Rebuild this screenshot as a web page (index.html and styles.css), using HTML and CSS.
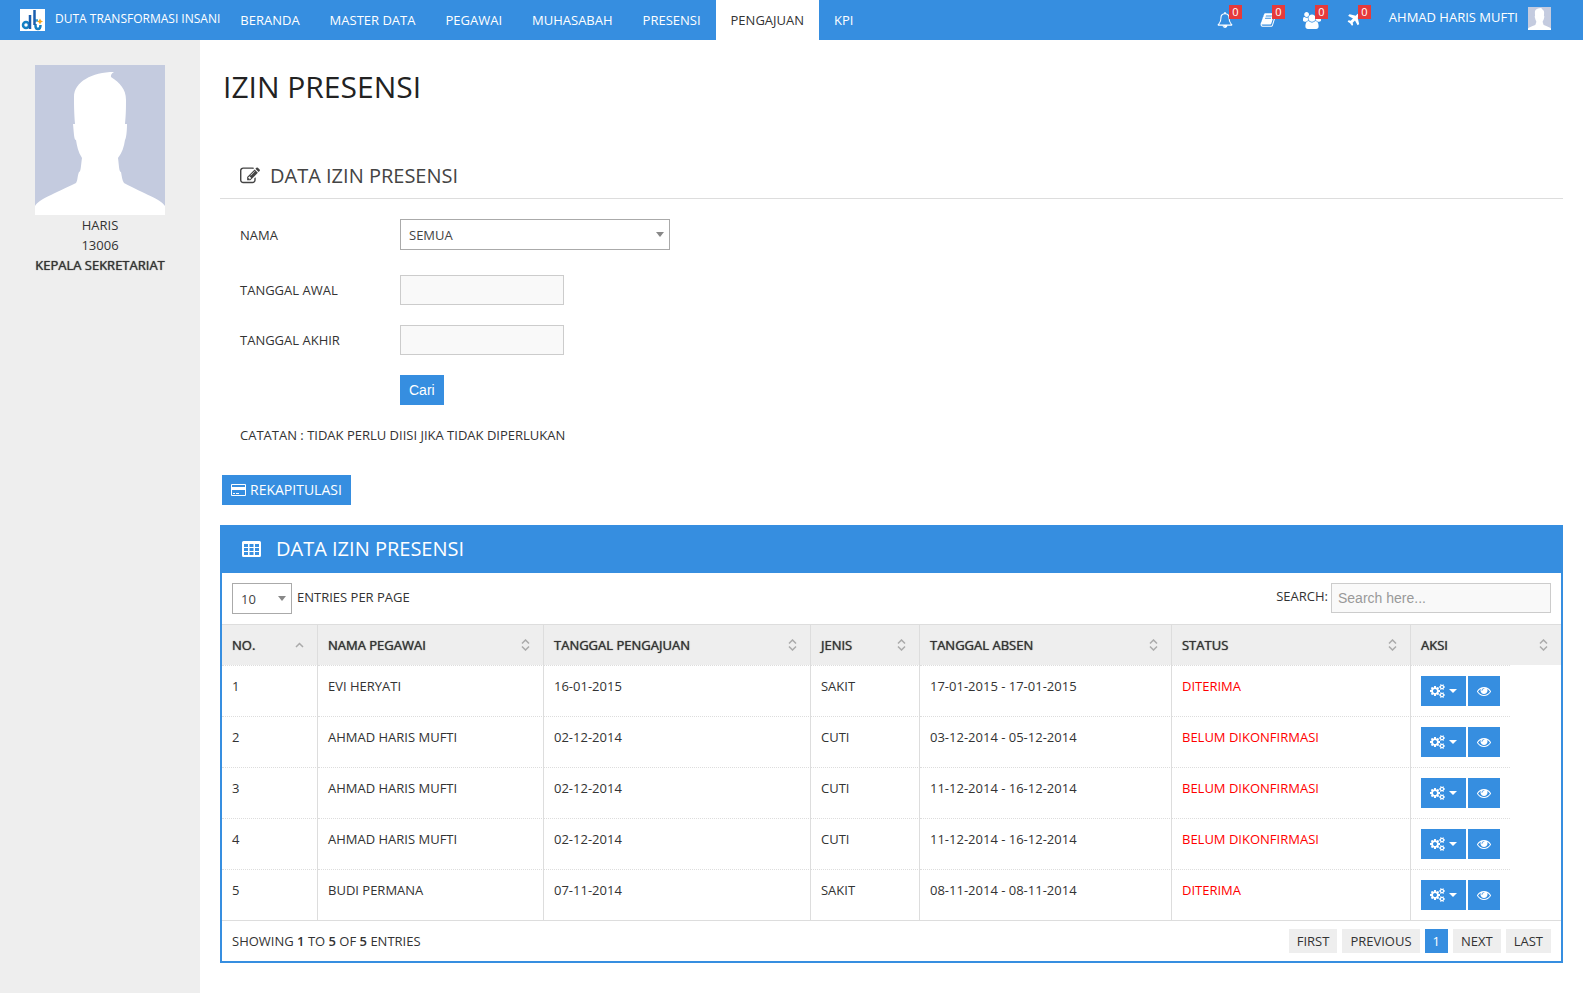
FILE: index.html
```html
<!DOCTYPE html>
<html lang="id">
<head>
<meta charset="utf-8">
<title>Izin Presensi</title>
<link rel="stylesheet" href="styles.css">
</head>
<body>
<svg class="sprite" aria-hidden="true">
  <symbol id="i-edit" viewBox="0 0 1792 1792"><path d="M888 1184l116-116-152-152-116 116v56h96v96h56zm440-720q-16-16-33 1l-350 350q-17 17-1 33t33-1l350-350q17-17 1-33zm80 594v190q0 119-84.5 203.5t-203.5 84.5h-832q-119 0-203.5-84.5t-84.5-203.5v-832q0-119 84.5-203.5t203.5-84.5h832q63 0 117 25 15 7 18 23 3 17-9 29l-49 49q-14 14-32 8-23-6-45-6h-832q-66 0-113 47t-47 113v832q0 66 47 113t113 47h832q66 0 113-47t47-113v-126q0-13 9-22l64-64q15-15 35-7t20 29zm-96-738l288 288-672 672h-288v-288zm444 132l-92 92-288-288 92-92q28-28 68-28t68 28l152 152q28 28 28 68t-28 68z"/></symbol>
  <symbol id="i-eye" viewBox="0 0 1792 1792"><path d="M1664 960q-152-236-381-353 61 104 61 225 0 185-131.5 316.5t-316.5 131.5-316.5-131.5-131.5-316.5q0-121 61-225-229 117-381 353 133 205 333.5 326.5t434.5 121.5 434.5-121.5 333.5-326.5zm-720-384q0-20-14-34t-34-14q-125 0-214.5 89.5t-89.5 214.5q0 20 14 34t34 14 34-14 14-34q0-86 61-147t147-61q20 0 34-14t14-34zm848 384q0 34-20 69-140 230-376.5 368.5t-499.5 138.5-499.5-139-376.5-368q-20-35-20-69t20-69q140-229 376.5-368t499.5-139 499.5 139 376.5 368q20 35 20 69z"/></symbol>
  <symbol id="i-cogs" viewBox="0 0 1920 1792"><path d="M896 896q0-106-75-181t-181-75-181 75-75 181 75 181 181 75 181-75 75-181zm768 512q0-52-38-90t-90-38-90 38-38 90q0 53 37.500 90.500t90.500 37.500 90.500-37.500 37.500-90.500zm0-1024q0-52-38-90t-90-38-90 38-38 90q0 53 37.500 90.500t90.500 37.500 90.500-37.500 37.500-90.500zm-384 421v185q0 10-7 19.500t-16 10.500l-155 24q-11 35-32 76 34 48 90 115 7 11 7 20 0 12-7 19-23 30-82.500 89.500t-78.500 59.500q-11 0-21-7l-115-90q-37 19-77 31-11 108-23 155-7 24-30 24h-186q-11 0-20-7.500t-10-17.500l-23-153q-34-10-75-31l-118 89q-7 7-20 7-11 0-21-8-144-133-144-160 0-9 7-19 10-14 41-53t47-61q-23-44-35-82l-152-24q-10-1-17-9.500t-7-19.500v-185q0-10 7-19.500t16-10.500l155-24q11-35 32-76-34-48-90-115-7-11-7-20 0-12 7-20 22-30 82-89t79-59q11 0 21 7l115 90q34-18 77-32 11-108 23-154 7-24 30-24h186q11 0 20 7.500t10 17.500l23 153q34 10 75 31l118-89q8-7 20-7 11 0 21 8 144 133 144 160 0 8-7 19-12 16-42 54t-45 60q23 48 34 82l152 23q10 2 17 10.500t7 19.500zm640 533v140q0 16-149 31-12 27-30 52 51 113 51 138 0 4-4 7-122 71-124 71-8 0-46-47t-52-68q-20 2-30 2t-30-2q-14 21-52 68t-46 47q-2 0-124-71-4-3-4-7 0-25 51-138-18-25-30-52-149-15-149-31v-140q0-16 149-31 13-29 30-52-51-113-51-138 0-4 4-7 4-2 35-20t59-34 30-16q8 0 46 46.500t52 67.500q20-2 30-2t30 2q51-71 92-112l6-2q4 0 124 70 4 3 4 7 0 25-51 138 17 23 30 52 149 15 149 31zm0-1024v140q0 16-149 31-12 27-30 52 51 113 51 138 0 4-4 7-122 71-124 71-8 0-46-47t-52-68q-20 2-30 2t-30-2q-14 21-52 68t-46 47q-2 0-124-71-4-3-4-7 0-25 51-138-18-25-30-52-149-15-149-31v-140q0-16 149-31 13-29 30-52-51-113-51-138 0-4 4-7 4-2 35-20t59-34 30-16q8 0 46 46.500t52 67.500q20-2 30-2t30 2q51-71 92-112l6-2q4 0 124 70 4 3 4 7 0 25-51 138 17 23 30 52 149 15 149 31z"/></symbol>
  <symbol id="i-users" viewBox="-64 0 1920 1792"><path d="M529 896q-162 5-265 128h-134q-82 0-138-40.500t-56-118.500q0-353 124-353 6 0 43.500 21t97.500 42.500 119 21.500q67 0 133-23-5 37-5 66 0 139 81 256zm1071 637q0 120-73 189.500t-194 69.500h-874q-121 0-194-69.500t-73-189.500q0-53 3.500-103.500t14-109 26.500-108.500 43-97.500 62-81 85.500-53.500 111.500-20q10 0 43 21.500t73 48 107 48 135 21.500 135-21.500 107-48 73-48 43-21.500q61 0 111.500 20t85.500 53.500 62 81 43 97.500 26.500 108.500 14 109 3.500 103.500zm-1024-1277q0 106-75 181t-181 75-181-75-75-181 75-181 181-75 181 75 75 181zm704 384q0 159-112.500 271.500t-271.500 112.500-271.500-112.500-112.500-271.500 112.500-271.500 271.500-112.500 271.500 112.500 112.500 271.500zm576 225q0 78-56 118.500t-138 40.500h-134q-103-123-265-128 81-117 81-256 0-29-5-66 66 23 133 23 59 0 119-21.500t97.500-42.500 43.500-21q124 0 124 353zm-128-609q0 106-75 181t-181 75-181-75-75-181 75-181 181-75 181 75 75 181z"/></symbol>
  <symbol id="i-plane" viewBox="0 0 1792 1792"><path d="M1568 160q44 52 12 148t-108 172l-161 161 160 696q5 19-12 33l-128 96q-7 6-19 6-4 0-7-1-15-3-21-16l-279-508-259 259 53 194q5 17-8 31l-96 96q-9 9-23 9h-2q-15-2-24-13l-189-252-252-189q-11-7-13-23-1-13 9-25l96-97q9-9 23-9 6 0 8 1l194 53 259-259-508-279q-14-8-17-24-2-16 9-27l128-128q14-13 30-8l665 159 160-160q76-76 172-108t148 12z"/></symbol>
  <symbol id="i-book" viewBox="0 0 1792 1792"><path d="M1703 478q40 57 18 129l-275 906q-19 64-76.500 107.500t-122.500 43.500h-923q-77 0-148.500-53.500t-99.500-131.500q-24-67-2-127 0-4 3-27t4-37q1-8-3-21.500t-3-19.500q2-11 8-21t16.500-23.500 16.500-23.500q23-38 45-91.500t30-91.500q3-10 .5-30t-.5-28q3-11 17-28t17-23q21-36 42-92t25-90q1-9-2.500-32t.5-28q4-13 22-30.500t22-22.500q19-26 42.500-84.500t27.500-96.500q1-8-3-25.500t-2-26.500q2-8 9-18t18-23 17-21q8-12 16.500-30.500t15-35 16-36 19.500-32 26.500-23.500 36-11.500 47.500 5.500l-1 3q38-9 51-9h761q74 0 114 56t18 130l-274 906q-36 119-71.500 153.500t-128.500 34.500h-869q-27 0-38 15-11 16-1 43 24 70 144 70h923q29 0 56-15.500t35-41.500l300-987q7-22 5-57 38 15 59 43zm-1064 2q-4 13 2 22.500t20 9.500h608q13 0 25.500-9.500t16.500-22.500l21-64q4-13-2-22.500t-20-9.500h-608q-13 0-25.500 9.500t-16.500 22.500zm-83 256q-4 13 2 22.500t20 9.500h608q13 0 25.500-9.500t16.500-22.500l21-64q4-13-2-22.500t-20-9.500h-608q-13 0-25.500 9.500t-16.500 22.500z"/></symbol>
  <symbol id="i-bell" viewBox="0 0 1792 1792"><path d="M912 1696q0-16-16-16-59 0-101.500-42.500t-42.500-101.500q0-16-16-16t-16 16q0 73 51.500 124.500t124.500 51.500q16 0 16-16zm-666-288h1300q-266-300-266-832 0-51-24-105t-69-103-121.500-80.500-169.500-31.500-169.500 31.500-121.500 80.500-69 103-24 105q0 532-266 832zm1482 0q0 52-38 90t-90 38h-448q0 106-75 181t-181 75-181-75-75-181h-448q-52 0-90-38t-38-90q50-42 91-88t85-119.500 74.500-158.500 50-206 19.500-260q0-152 117-282.500t307-158.500q-8-19-8-39 0-40 28-68t68-28 68 28 28 68q0 20-8 39 190 28 307 158.500t117 282.500q0 139 19.500 260t50 206 74.500 158.500 85 119.500 91 88z"/></symbol>
  <symbol id="i-table" viewBox="0 0 19 16"><path fill-rule="evenodd" d="M1.500 0h16A1.500 1.500 0 0 1 19 1.500v13a1.500 1.500 0 0 1-1.500 1.500h-16A1.500 1.500 0 0 1 0 14.500v-13A1.500 1.500 0 0 1 1.500 0zM2 3v3h4V3zM7.500 3v3h4V3zM13 3v3h4V3zM2 7v3h4V7zM7.500 7v3h4V7zM13 7v3h4V7zM2 11v3h4v-3zM7.500 11v3h4v-3zM13 11v3h4v-3z"/></symbol>
  <symbol id="i-card" viewBox="0 0 15 12"><path fill-rule="evenodd" d="M1 0h13a1 1 0 0 1 1 1v10a1 1 0 0 1-1 1H1a1 1 0 0 1-1-1V1a1 1 0 0 1 1-1zM1 1v2h13V1zM1 6v5h13V6zM2 9h2v1H2zM5 9h3v1H5z"/></symbol>
  <symbol id="i-sort" viewBox="0 0 9 12"><path class="line" d="M1 4.500L4.500 1 8 4.500M1 7.500L4.500 11 8 7.500"/></symbol>
  <symbol id="i-asc" viewBox="0 0 9 12"><path class="line" d="M1 8L4.500 4.500 8 8"/></symbol>
  <symbol id="i-person" viewBox="0 0 130 150" preserveAspectRatio="none"><path fill="#c4cbdf" d="M0 0h130v150H0z"/><path fill="#fff" d="M0 150v-9c4-7 19-12 41-23 2-3 1-6 3-11 2 0 2-8 3-14-4-6-5-12-6-18-2 0-2-6-3-16h2c-1-13-1-20-1-27C39 17 57 7 79 7c-3 2-3 3-3 5 9 6 15 12 15 23 0 8 0 14-1 24h2c0 8-1 15-2 16-1 7-3 13-7 18 1 7 1 14 3 14 1 5 1 8 3 11 20 11 37 16 41 23v9z"/></symbol>
</svg>

<header class="topbar">
  <a class="brand" href="#">
    <svg class="logo" viewBox="0 0 25 22" aria-hidden="true"><path fill="#fff" d="M0 0h25v22H0z"/><g fill="none" stroke-width="2.500"><circle cx="6" cy="16" r="3" stroke="#1480c4"/><path stroke="#35a0d0" d="M15 11.500h3"/><path stroke="#1480c4" d="M15.500 15v2q0 3 2.500 3 2.500 0 2.500-4"/><path stroke="#1b5fae" d="M10 20V6M14.500 16V1"/></g><path fill="#f6a51c" d="M20 9.500l1 2 2 1-2 1-1 2-1-2-2-1 2-1z"/></svg>
    <span>DUTA TRANSFORMASI INSANI</span>
  </a>
  <nav class="menu">
    <a href="#">BERANDA</a><a href="#">MASTER DATA</a><a href="#">PEGAWAI</a><a href="#">MUHASABAH</a><a href="#">PRESENSI</a><a class="active" href="#">PENGAJUAN</a><a href="#">KPI</a>
  </nav>
  <div class="tools">
    <a class="notice" href="#" aria-label="Notifikasi"><svg class="i16"><use href="#i-bell"/></svg><span class="badge">0</span></a>
    <a class="notice" href="#" aria-label="Buku"><svg class="i16"><use href="#i-book"/></svg><span class="badge">0</span></a>
    <a class="notice" href="#" aria-label="Pegawai"><svg class="i18"><use href="#i-users"/></svg><span class="badge">0</span></a>
    <a class="notice" href="#" aria-label="Perjalanan"><svg class="i16"><use href="#i-plane"/></svg><span class="badge">0</span></a>
    <a class="account" href="#"><span>AHMAD HARIS MUFTI</span><svg class="avatar"><use href="#i-person"/></svg></a>
  </div>
</header>

<div class="page">
  <aside class="sidebar">
    <svg class="photo"><use href="#i-person"/></svg>
    <div>HARIS</div>
    <div>13006</div>
    <strong>KEPALA SEKRETARIAT</strong>
  </aside>

  <main class="content">
    <h1>IZIN PRESENSI</h1>

    <section>
      <h2 class="section-title"><svg class="i20"><use href="#i-edit"/></svg>DATA IZIN PRESENSI</h2>
      <form class="filter">
        <label class="wide-label" for="nama">NAMA</label>
        <span class="select wide"><select id="nama"><option>SEMUA</option></select></span>
        <label for="awal">TANGGAL AWAL</label>
        <input class="field date" id="awal" type="text">
        <label for="akhir">TANGGAL AKHIR</label>
        <input class="field date" id="akhir" type="text">
        <button class="btn search-btn" type="button">Cari</button>
        <p class="note">CATATAN : TIDAK PERLU DIISI JIKA TIDAK DIPERLUKAN</p>
      </form>
    </section>

    <button class="btn recap" type="button"><svg class="card"><use href="#i-card"/></svg>REKAPITULASI</button>

    <section class="panel">
      <h2 class="panel-title"><svg class="grid-icon"><use href="#i-table"/></svg>DATA IZIN PRESENSI</h2>
      <div class="controls">
        <div class="entries"><span class="select"><select id="len"><option>10</option></select></span><label for="len">ENTRIES PER PAGE</label></div>
        <div class="search"><label for="q">SEARCH:</label><input class="field" id="q" type="text" placeholder="Search here..."></div>
      </div>
      <table>
        <colgroup><col class="c-no"><col class="c-name"><col><col class="c-type"><col class="c-absen"><col class="c-status"><col class="c-act"><col class="c-rest"></colgroup>
        <thead>
          <tr>
            <th><div class="th">NO.<svg class="sort"><use href="#i-asc"/></svg></div></th>
            <th><div class="th">NAMA PEGAWAI<svg class="sort"><use href="#i-sort"/></svg></div></th>
            <th><div class="th">TANGGAL PENGAJUAN<svg class="sort"><use href="#i-sort"/></svg></div></th>
            <th><div class="th">JENIS<svg class="sort"><use href="#i-sort"/></svg></div></th>
            <th><div class="th">TANGGAL ABSEN<svg class="sort"><use href="#i-sort"/></svg></div></th>
            <th><div class="th">STATUS<svg class="sort"><use href="#i-sort"/></svg></div></th>
            <th class="last" colspan="2"><div class="th">AKSI<svg class="sort"><use href="#i-sort"/></svg></div></th>
          </tr>
        </thead>
        <tbody>
          <tr><td>1</td><td>EVI HERYATI</td><td>16-01-2015</td><td>SAKIT</td><td>17-01-2015 - 17-01-2015</td><td class="status">DITERIMA</td><td class="act"><div class="actions"><button class="btn gear" type="button" aria-label="Opsi"><svg class="cogs"><use href="#i-cogs"/></svg><i class="caret"></i></button><button class="btn" type="button" aria-label="Lihat"><svg class="i14"><use href="#i-eye"/></svg></button></div></td></tr>
          <tr><td>2</td><td>AHMAD HARIS MUFTI</td><td>02-12-2014</td><td>CUTI</td><td>03-12-2014 - 05-12-2014</td><td class="status">BELUM DIKONFIRMASI</td><td class="act"><div class="actions"><button class="btn gear" type="button" aria-label="Opsi"><svg class="cogs"><use href="#i-cogs"/></svg><i class="caret"></i></button><button class="btn" type="button" aria-label="Lihat"><svg class="i14"><use href="#i-eye"/></svg></button></div></td></tr>
          <tr><td>3</td><td>AHMAD HARIS MUFTI</td><td>02-12-2014</td><td>CUTI</td><td>11-12-2014 - 16-12-2014</td><td class="status">BELUM DIKONFIRMASI</td><td class="act"><div class="actions"><button class="btn gear" type="button" aria-label="Opsi"><svg class="cogs"><use href="#i-cogs"/></svg><i class="caret"></i></button><button class="btn" type="button" aria-label="Lihat"><svg class="i14"><use href="#i-eye"/></svg></button></div></td></tr>
          <tr><td>4</td><td>AHMAD HARIS MUFTI</td><td>02-12-2014</td><td>CUTI</td><td>11-12-2014 - 16-12-2014</td><td class="status">BELUM DIKONFIRMASI</td><td class="act"><div class="actions"><button class="btn gear" type="button" aria-label="Opsi"><svg class="cogs"><use href="#i-cogs"/></svg><i class="caret"></i></button><button class="btn" type="button" aria-label="Lihat"><svg class="i14"><use href="#i-eye"/></svg></button></div></td></tr>
          <tr><td>5</td><td>BUDI PERMANA</td><td>07-11-2014</td><td>SAKIT</td><td>08-11-2014 - 08-11-2014</td><td class="status">DITERIMA</td><td class="act"><div class="actions"><button class="btn gear" type="button" aria-label="Opsi"><svg class="cogs"><use href="#i-cogs"/></svg><i class="caret"></i></button><button class="btn" type="button" aria-label="Lihat"><svg class="i14"><use href="#i-eye"/></svg></button></div></td></tr>
        </tbody>
      </table>
      <div class="foot">
        <div>SHOWING <b>1</b> TO <b>5</b> OF <b>5</b> ENTRIES</div>
        <nav class="pager"><a href="#">FIRST</a><a href="#">PREVIOUS</a><a class="current" href="#">1</a><a href="#">NEXT</a><a href="#">LAST</a></nav>
      </div>
    </section>
  </main>
</div>
</body>
</html>
```
FILE: styles.css
```css
* { box-sizing: border-box; }
body {
  margin: 0;
  min-height: 100vh;
  display: flex;
  flex-direction: column;
  font: 13px/20px "Open Sans", sans-serif;
  color: #333;
  background: #fff;
}
a { color: inherit; text-decoration: none; }
svg { display: block; flex: none; fill: currentColor; }
.sprite { position: absolute; width: 0; height: 0; }
.line { fill: none; stroke: currentColor; stroke-width: 1.5; }
b { font-weight: 600; }
strong, th { font-weight: 400; text-shadow: 0 0 1px #333; }

.topbar {
  display: flex;
  height: 40px;
  color: #fff;
  background: #368ee0;
}
.brand { display: flex; gap: 10px; padding: 9px 5px 0 20px; font-size: 12px; white-space: nowrap; }
.brand span { line-height: 19px; }
.logo { width: 25px; height: 22px; }
.menu { display: flex; flex: 1; }
.menu a { padding: 0 15px; line-height: 40px; white-space: nowrap; }
.menu .active { color: #333; background: #fff; }
.tools { display: flex; padding-right: 32px; }
.notice { position: relative; width: 43px; padding: 12px 0 0 12px; }
.badge {
  position: absolute;
  top: 5px;
  right: 6px;
  width: 13px;
  font-size: 11px;
  line-height: 14px;
  text-align: center;
  background: #e63a3a;
}
.i16 { width: 16px; height: 16px; }
.i18 { width: 18px; height: 17px; }
.i20 { width: 20px; height: 20px; }
.account { display: flex; gap: 10px; padding: 7px 0 0 12px; white-space: nowrap; }
.avatar { width: 23px; height: 23px; }

.page { display: flex; flex: 1; }
.sidebar {
  width: 200px;
  flex: none;
  display: flex;
  flex-direction: column;
  align-items: center;
  padding-top: 25px;
  background: #eee;
}
.photo { width: 130px; height: 150px; }
.content { flex: 1; min-width: 0; padding: 27px 20px 30px; }
h1, h2, p { margin: 0; font-weight: 400; }
h1 { padding-left: 3px; font-size: 30px; line-height: 40px; color: #222; }
.section-title {
  display: flex;
  align-items: center;
  gap: 10px;
  margin-top: 46px;
  padding: 8px 20px 7px;
  font-size: 20px;
  line-height: 30px;
  color: #444;
  border-bottom: 1px solid #ddd;
}

.filter {
  display: grid;
  grid-template-columns: 160px auto;
  justify-content: start;
  align-items: center;
  justify-items: start;
  row-gap: 20px;
  padding: 20px;
}
.search-btn { grid-column: 2; }
.note { grid-column: 1 / 3; }
.select { position: relative; display: block; width: 60px; }
.select.wide { width: 270px; }
.select.wide, .wide-label { margin-bottom: 5px; }
.select::after {
  content: "";
  position: absolute;
  top: 13px;
  right: 6px;
  border: 4px solid transparent;
  border-top: 5px solid #888;
  border-bottom: 0;
  pointer-events: none;
}
select {
  display: block;
  appearance: none;
  width: 100%;
  height: 31px;
  padding: 0 8px;
  font: inherit;
  color: #444;
  background: #fff;
  border: 1px solid #aaa;
  border-radius: 0;
}
.field {
  height: 30px;
  padding: 0 6px;
  font: 14px "Liberation Sans", Arial, sans-serif;
  background: #f9f9f9;
  border: 1px solid #ccc;
}
.field::placeholder { color: #999; }
.date { width: 164px; }
.btn {
  display: flex;
  align-items: center;
  justify-content: center;
  height: 30px;
  padding: 0 9px;
  font: 14px "Liberation Sans", Arial, sans-serif;
  color: #fff;
  background: #368ee0;
  border: 0;
}
.recap { gap: 4px; margin: 10px 0 20px 2px; padding-bottom: 1px; font-family: "Open Sans", sans-serif; }
.card { width: 15px; height: 12px; }

.panel { border: 2px solid #368ee0; border-top: 0; }
.panel-title {
  display: flex;
  align-items: center;
  gap: 15px;
  padding: 9px 20px;
  font-size: 20px;
  line-height: 30px;
  color: #fff;
  background: #368ee0;
}
.grid-icon { width: 19px; height: 16px; }
.controls { display: flex; justify-content: space-between; padding: 10px; }
.entries { display: flex; gap: 5px; line-height: 28px; }
.search { display: flex; gap: 3px; line-height: 27px; }
.search .field { width: 220px; }

table { width: 100%; table-layout: fixed; border-collapse: separate; border-spacing: 0; }
.c-no { width: 96px; }
.c-name { width: 226px; }
.c-type { width: 109px; }
.c-absen { width: 252px; }
.c-status { width: 239px; }
.c-act { width: 99px; }
.c-rest { width: 51px; }
th, td { padding: 10px; text-align: left; vertical-align: top; border-right: 1px solid #ddd; }
th { padding-right: 13px; background: #eee; border-top: 1px solid #ddd; }
td { border-top: 1px dotted #ddd; }
th.last, td.act { border-right: 0; }
.th { display: flex; justify-content: space-between; align-items: center; }
.sort { width: 9px; height: 12px; color: #aaa; }
.status { color: #f00; }
.actions { display: flex; gap: 2px; }
.gear { gap: 4px; }
.cogs { width: 15px; height: 14px; }
.i14 { width: 14px; height: 14px; }
.caret { border: 4px solid transparent; border-top-color: #fff; border-bottom: 0; }

.foot {
  display: flex;
  justify-content: space-between;
  align-items: center;
  padding: 8px 10px;
  border-top: 1px solid #ddd;
}
.pager { display: flex; gap: 5px; }
.pager a { padding: 0 8px; line-height: 24px; background: #eee; }
.pager .current { color: #fff; background: #368ee0; }
```
